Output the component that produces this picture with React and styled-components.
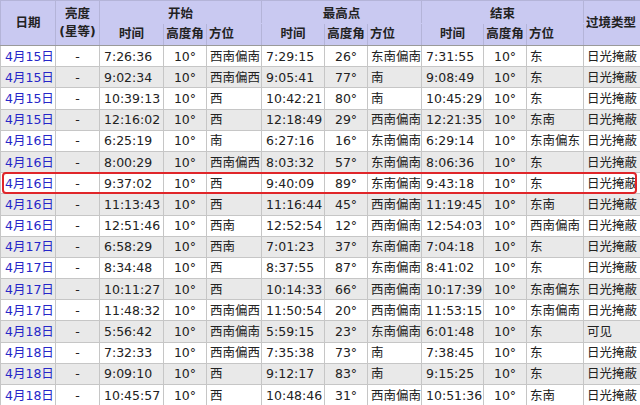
import React from 'react';
import styled, { createGlobalStyle } from 'styled-components';

const GlobalStyle = createGlobalStyle`
  html, body {
    margin: 0;
    padding: 0;
    background: #ffffff;
  }
  body {
    font-family: "DejaVu Sans", "Noto Sans CJK SC", sans-serif;
    font-size: 12.5px;
    color: #222;
  }
`;

const Wrapper = styled.div`
  position: relative;
  width: 640px;
  height: 405px;
  overflow: hidden;
`;

const Table = styled.table`
  border-collapse: collapse;
  table-layout: fixed;
  width: 641px;
  border-left: 1px solid #8a8a8a;
  border-top: 1px solid #8a8a8a;
`;

const Th = styled.th`
  background: #c9c9f1;
  font-weight: bold;
  color: #222;
  height: 21.5px;
  padding: 0 2px;
  text-align: ${({ $align }) => $align || 'center'};
  border: 1px solid #b4b4d8;
  border-bottom: ${({ $last }) => ($last ? '1px solid #9a9a9a' : '1px solid #c9c9f1')};
  line-height: 18px;
  white-space: nowrap;
  vertical-align: ${({ $top }) => ($top ? 'bottom' : 'middle')};
`;

const Tr = styled.tr`
  background: ${({ $alt }) => ($alt ? '#e9e9e9' : '#ffffff')};
  height: 21.2px;
`;

const Td = styled.td`
  padding: 0 ${({ $pad }) => $pad ?? 3}px;
  text-align: ${({ $align }) => $align || 'left'};
  color: ${({ $link }) => ($link ? '#2626c8' : '#222')};
  border: 1px solid #c6c6c6;
  white-space: nowrap;
  overflow: hidden;
  line-height: 19px;
`;

const Highlight = styled.div`
  position: absolute;
  left: 2px;
  right: 3px;
  top: 172px;
  height: 18px;
  border: 2px solid #e0262a;
  border-radius: 4px;
  pointer-events: none;
`;

const widths = [55, 44, 64, 43, 55, 63, 43, 54, 62, 43, 57, 58];

const rows = [
  ['4月15日', '7:26:36', '西南偏南', '7:29:15', '26°', '东南偏南', '7:31:55', '东', '日光掩蔽'],
  ['4月15日', '9:02:34', '西南偏西', '9:05:41', '77°', '南', '9:08:49', '东', '日光掩蔽'],
  ['4月15日', '10:39:13', '西', '10:42:21', '80°', '南', '10:45:29', '东', '日光掩蔽'],
  ['4月15日', '12:16:02', '西', '12:18:49', '29°', '西南偏南', '12:21:35', '东南', '日光掩蔽'],
  ['4月16日', '6:25:19', '南', '6:27:16', '16°', '东南偏南', '6:29:14', '东南偏东', '日光掩蔽'],
  ['4月16日', '8:00:29', '西南偏西', '8:03:32', '57°', '东南偏南', '8:06:36', '东', '日光掩蔽'],
  ['4月16日', '9:37:02', '西', '9:40:09', '89°', '东南偏南', '9:43:18', '东', '日光掩蔽'],
  ['4月16日', '11:13:43', '西', '11:16:44', '45°', '西南偏南', '11:19:45', '东南', '日光掩蔽'],
  ['4月16日', '12:51:46', '西南', '12:52:54', '12°', '西南偏南', '12:54:03', '西南偏南', '日光掩蔽'],
  ['4月17日', '6:58:29', '西南', '7:01:23', '37°', '东南偏南', '7:04:18', '东', '日光掩蔽'],
  ['4月17日', '8:34:48', '西', '8:37:55', '87°', '东南偏南', '8:41:02', '东', '日光掩蔽'],
  ['4月17日', '10:11:27', '西', '10:14:33', '66°', '西南偏南', '10:17:39', '东南偏东', '日光掩蔽'],
  ['4月17日', '11:48:32', '西南偏西', '11:50:54', '20°', '西南偏南', '11:53:15', '东南偏南', '日光掩蔽'],
  ['4月18日', '5:56:42', '西南偏南', '5:59:15', '23°', '东南偏南', '6:01:48', '东', '可见'],
  ['4月18日', '7:32:33', '西南偏西', '7:35:38', '73°', '南', '7:38:45', '东', '日光掩蔽'],
  ['4月18日', '9:09:10', '西', '9:12:17', '83°', '南', '9:15:25', '东', '日光掩蔽'],
  ['4月18日', '10:45:57', '西', '10:48:46', '31°', '西南偏南', '10:51:36', '东南', '日光掩蔽'],
];

const App = () => (
  <Wrapper>
    <GlobalStyle />
    <Table>
      <colgroup>
        {widths.map((w, i) => (
          <col key={i} style={{ width: w }} />
        ))}
      </colgroup>
      <thead>
        <tr>
          <Th rowSpan={2} $last>日期</Th>
          <Th rowSpan={2} $last>亮度<br />(星等)</Th>
          <Th colSpan={3} $top>开始</Th>
          <Th colSpan={3} $top>最高点</Th>
          <Th colSpan={3} $top>结束</Th>
          <Th rowSpan={2} $last $align="left">过境类型</Th>
        </tr>
        <tr>
          <Th $last>时间</Th>
          <Th $last>高度角</Th>
          <Th $last $align="left">方位</Th>
          <Th $last>时间</Th>
          <Th $last>高度角</Th>
          <Th $last $align="left">方位</Th>
          <Th $last>时间</Th>
          <Th $last>高度角</Th>
          <Th $last $align="left">方位</Th>
        </tr>
      </thead>
      <tbody>
        {rows.map((r, i) => (
          <Tr key={i} $alt={i % 2 === 1}>
            <Td $link $pad={4}>{r[0]}</Td>
            <Td $align="center">-</Td>
            <Td $pad={4}>{r[1]}</Td>
            <Td $align="center">10°</Td>
            <Td>{r[2]}</Td>
            <Td $pad={4}>{r[3]}</Td>
            <Td $align="center">{r[4]}</Td>
            <Td>{r[5]}</Td>
            <Td $pad={4}>{r[6]}</Td>
            <Td $align="center">10°</Td>
            <Td>{r[7]}</Td>
            <Td>{r[8]}</Td>
          </Tr>
        ))}
      </tbody>
    </Table>
    <Highlight />
  </Wrapper>
);

export default App;
